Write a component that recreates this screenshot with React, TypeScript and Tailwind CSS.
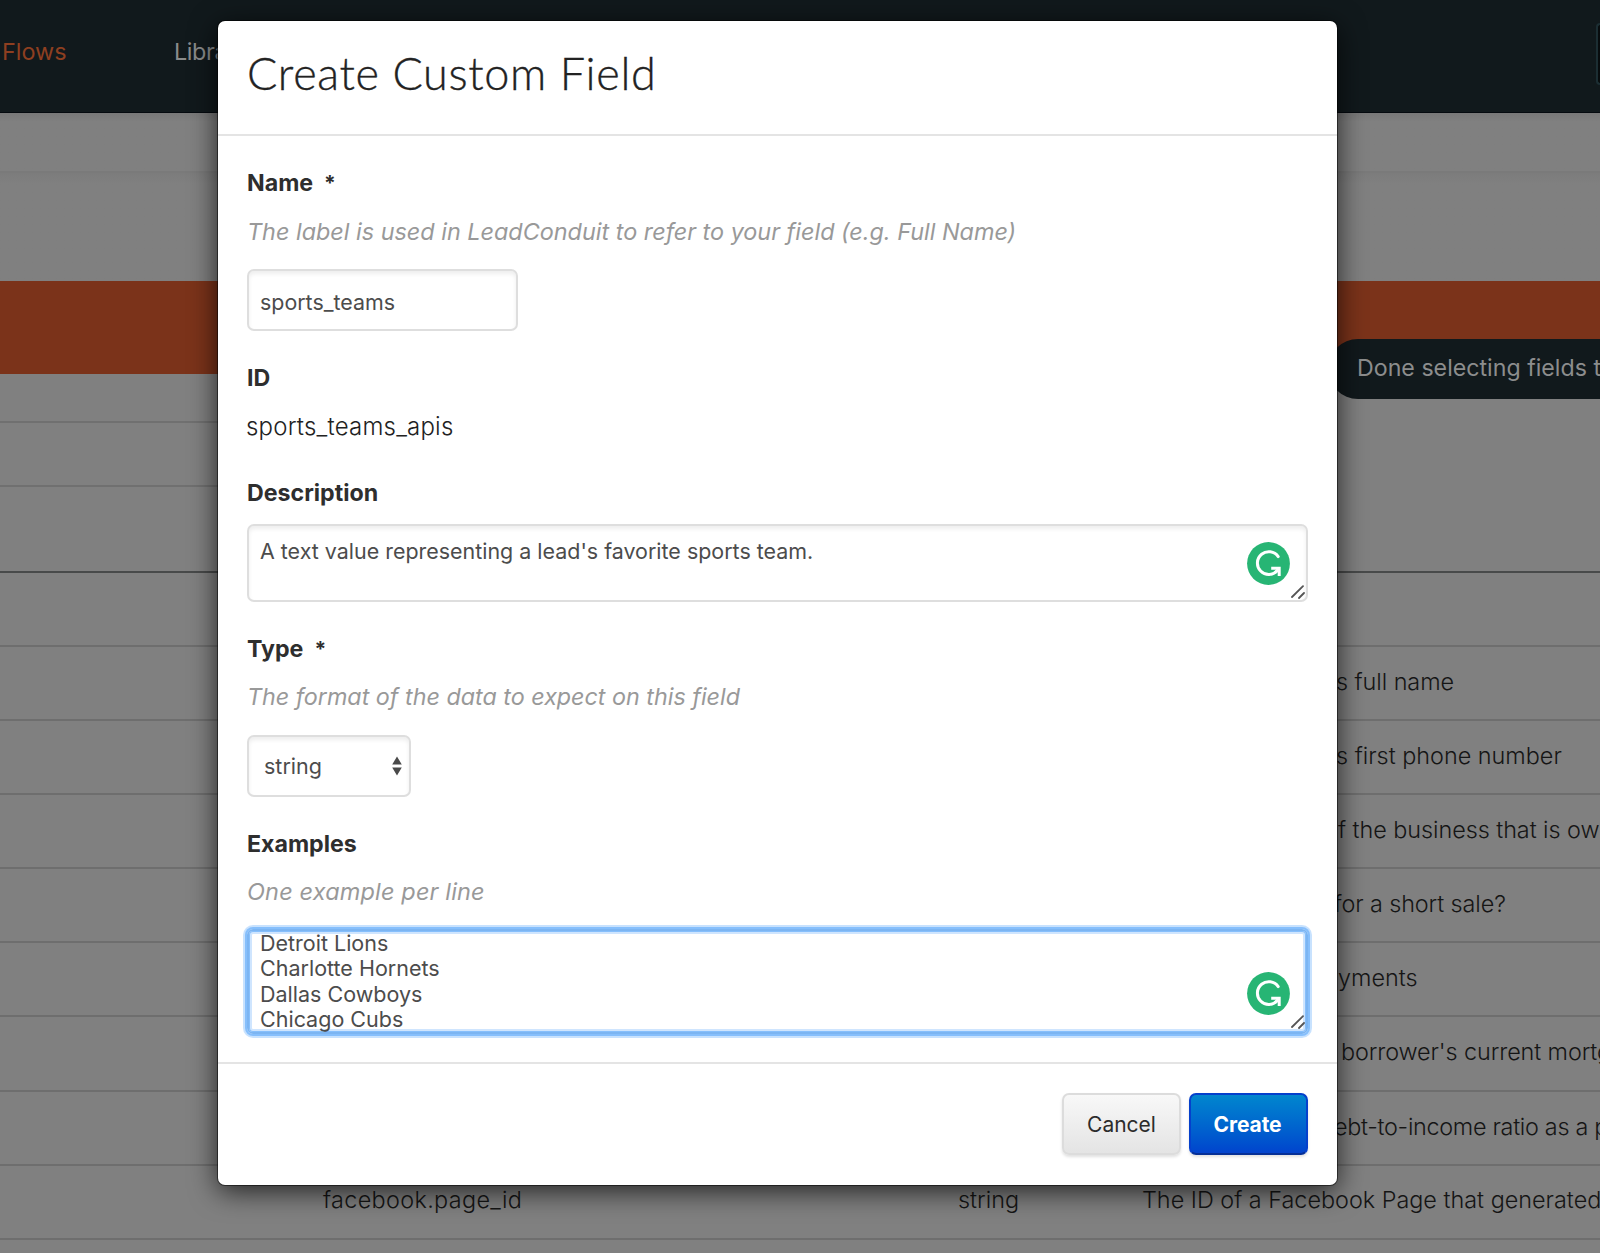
import React from "react";

type Row = { text: string; indent: string };

const rows: Row[] = [
  { text: "s full name", indent: "pl-[1336px] tracking-[-0.05px]" },
  { text: "s first phone number", indent: "pl-[1336px]" },
  { text: "f the business that is owned", indent: "pl-[1338px] tracking-[-0.05px]" },
  { text: "for a short sale?", indent: "pl-[1334px] tracking-[-0.1px]" },
  { text: "yments", indent: "pl-[1338px]" },
  { text: "borrower's current mortgage", indent: "pl-[1341px] tracking-[-0.1px]" },
  { text: "ebt-to-income ratio as a percent", indent: "pl-[1334px] tracking-[-0.3px]" },
];

function Assistant() {
  return (
    <svg viewBox="0 0 43 43" className="size-[43px]" fill="none">
      <circle cx="21.5" cy="21.5" r="21.4" fill="#27b574" />
      <path d="M31.2 14.6A11.4 11.4 0 1 0 30.4 28.6" stroke="#fff" strokeWidth="3" strokeLinecap="round" />
      <path d="M24.2 26.2H32.2V34" stroke="#fff" strokeWidth="3" />
      <path d="M28 30.6L32 26.6" stroke="#fff" strokeWidth="2.6" />
    </svg>
  );
}

function Grip() {
  return (
    <svg viewBox="0 0 14 14" className="size-[14px]" stroke="#555" strokeWidth="1.8" strokeLinecap="round">
      <path d="M1 12L12 1.2M8 13L13 8" />
    </svg>
  );
}

function Label({ children, required }: { children: string; required?: boolean }) {
  return (
    <div className="h-[49px] text-[23.2px] leading-[51px] font-bold text-[#2e2e2e]">
      {children}
      {required && <span className="ml-[11px] text-[21px]">*</span>}
    </div>
  );
}

function Help({ children, className }: { children: string; className: string }) {
  return <div className={`whitespace-nowrap text-[#999] italic ${className}`}>{children}</div>;
}

function Backdrop() {
  return (
    <div className="flex h-full flex-col text-[23.4px] text-[#151515]">
      <div className="flex h-[113px] shrink-0 items-start justify-between border-b border-[#050a0f] bg-[#11191c] text-[23.4px] leading-[48px]">
        <div className="flex pt-[28px]">
          <span className="w-[174px] pl-[2px] text-[#8e3f20]">Flows</span>
          <span className="tracking-[-0.4px] text-[#8a8b8b]">Library</span>
        </div>
        <div className="mt-[23px] h-[62px] w-[4px] rounded-l-lg border-2 border-r-0 border-[#1c2e33] bg-[#080c0e]" />
      </div>
      <div className="h-[60px] shrink-0 border-b-2 border-[#7a7a7a] bg-linear-to-b from-[#787878] to-[#808080] to-15%" />
      <div className="h-[108px] shrink-0 bg-linear-to-b from-[#7c7c7c] to-[#808080] to-10%" />
      <div className="h-[93px] shrink-0 bg-[#7b331a]" />
      <div className="flex h-[199px] shrink-0 flex-col border-b-2 border-[#484a4a]">
        <div className="h-[49px] w-[700px] border-b-2 border-[#707070]" />
        <div className="h-[64px] w-[700px] border-b-2 border-[#707070]" />
      </div>
      <div className="h-[74px] shrink-0 border-b-2 border-[#6e6e6e]" />
      {rows.map((row) => (
        <div
          key={row.text}
          className={`h-[74.1px] shrink-0 overflow-hidden border-b-2 border-[#6e6e6e] leading-[69px] font-light whitespace-nowrap ${row.indent}`}
        >
          {row.text}
        </div>
      ))}
      <div className="flex h-[74.1px] shrink-0 overflow-hidden border-b-2 border-[#6e6e6e] leading-[68px] font-light whitespace-nowrap">
        <span className="w-[958px] shrink-0 pl-[323px] tracking-[0.35px]">facebook.page_id</span>
        <span className="w-[184px] shrink-0">string</span>
        <span>The ID of a Facebook Page that generated</span>
      </div>
    </div>
  );
}

export default function App() {
  return (
    <div className="relative h-[1253px] w-[1600px] overflow-hidden bg-[#808080] font-['Inter',sans-serif]">
      <Backdrop />

      <div className="absolute top-[339px] left-[1328px] h-[60px] w-[400px] rounded-[30px] bg-[#11191c] pl-[29px] text-[23.2px] leading-[58px] whitespace-nowrap text-[#8c8d8d]">
        Done selecting fields to add
      </div>

      <div className="absolute inset-0 flex items-start pt-[21px] pl-[218px]">
        <div className="flex h-[1164px] w-[1119px] flex-col rounded-[7px] bg-white shadow-[0_0_0_1px_rgba(0,0,0,0.5),0_6px_28px_rgba(0,0,0,0.75)]">
          <div className="h-[115px] shrink-0 border-b-2 border-[#e4e4e4] pl-[29px]">
            <h1 className="font-['Lato',sans-serif] text-[45px] leading-[104px] font-light tracking-[0.65px] whitespace-nowrap text-[#222] [-webkit-text-stroke:0.35px_#222]">
              Create Custom Field
            </h1>
          </div>

          <div className="flex flex-col px-[29px] pt-[22px] pb-[28px]">
            <Label required>Name</Label>
            <Help className="h-[49px] text-[23.4px] leading-[49px]">
              The label is used in LeadConduit to refer to your field (e.g. Full Name)
            </Help>
            <div className="mt-[13px] h-[62px] w-[271px] rounded-[7px] border-2 border-[#dedede] pl-[11px] text-[21.4px] leading-[62px] text-[#4c4c4c] shadow-[inset_0_3px_4px_rgba(0,0,0,0.07)]">
              sports_teams
            </div>

            <div className="mt-[22px]">
              <Label>ID</Label>
            </div>
            <div className="-ml-px h-[48px] text-[24px] leading-[50px] font-light tracking-[0.2px] text-[#222]">
              sports_teams_apis
            </div>

            <div className="mt-[18px]">
              <Label>Description</Label>
            </div>
            <div className="relative mt-[7px] h-[78px] w-[1061px] rounded-[7px] border-2 border-[#dedede] pt-[12px] pl-[11px] text-[21.45px] leading-[26px] text-[#4c4c4c] shadow-[inset_0_3px_4px_rgba(0,0,0,0.07)]">
              A text value representing a lead's favorite sports team.
              <div className="absolute top-[16px] right-[16px]">
                <Assistant />
              </div>
              <div className="absolute right-[1px] bottom-[1px]">
                <Grip />
              </div>
            </div>

            <div className="mt-[22px]">
              <Label required>Type</Label>
            </div>
            <Help className="h-[48px] text-[23.3px] leading-[48px]">
              The format of the data to expect on this field
            </Help>
            <div className="mt-[14px] flex h-[62px] w-[164px] items-center justify-between rounded-[7px] border-2 border-[#dedede] pr-[7px] pl-[15px] text-[21.5px] text-[#4c4c4c] shadow-[inset_0_3px_4px_rgba(0,0,0,0.07)]">
              <span className="pt-px">string</span>
              <svg viewBox="0 0 10 20" className="h-[20px] w-[10px]" fill="#4a4a4a">
                <path d="M5 0.5L9.8 8.5H0.2ZM5 19.5L9.8 11.5H0.2Z" />
              </svg>
            </div>

            <div className="mt-[22px]">
              <Label>Examples</Label>
            </div>
            <Help className="h-[48px] text-[23.5px] leading-[48px] tracking-[0.15px]">One example per line</Help>
            <div className="relative mt-[13px] h-[105px] w-[1061px] rounded-[6px] border-2 border-[#7cb5f2] pl-[11px] text-[21.5px] leading-[25.4px] text-[#4c4c4c] shadow-[0_0_0_2px_#86bffc,0_0_0_4px_rgba(134,191,252,0.45),inset_0_0_0_1px_#86bffc,inset_0_0_0_3px_rgba(134,191,252,0.4)]">
              <div>Detroit Lions</div>
              <div>Charlotte Hornets</div>
              <div>Dallas Cowboys</div>
              <div>Chicago Cubs</div>
              <div className="absolute right-[16px] bottom-[17px]">
                <Assistant />
              </div>
              <div className="absolute right-[1px] bottom-[3px]">
                <Grip />
              </div>
            </div>
          </div>

          <div className="flex flex-1 items-start justify-end gap-[8px] border-t-2 border-[#e4e4e4] pt-[29px] pr-[29px] text-[21px]">
            <button className="h-[62px] w-[119px] rounded-[7px] border-2 border-[#dcdcdc] bg-linear-to-b from-[#f8f8f8] to-[#e4e4e4] pt-[2px] text-[#2c2c2c] shadow-[0_2px_3px_rgba(0,0,0,0.12)]">
              Cancel
            </button>
            <button className="h-[62px] w-[119px] rounded-[7px] border-2 border-[#0540cc] border-b-[#062f96] bg-linear-to-b from-[#0486ce] to-[#0443cd] pt-[2px] pr-[2px] font-bold tracking-[-0.1px] text-white shadow-[0_2px_3px_rgba(0,0,0,0.12)]">
              Create
            </button>
          </div>
        </div>
      </div>
    </div>
  );
}
